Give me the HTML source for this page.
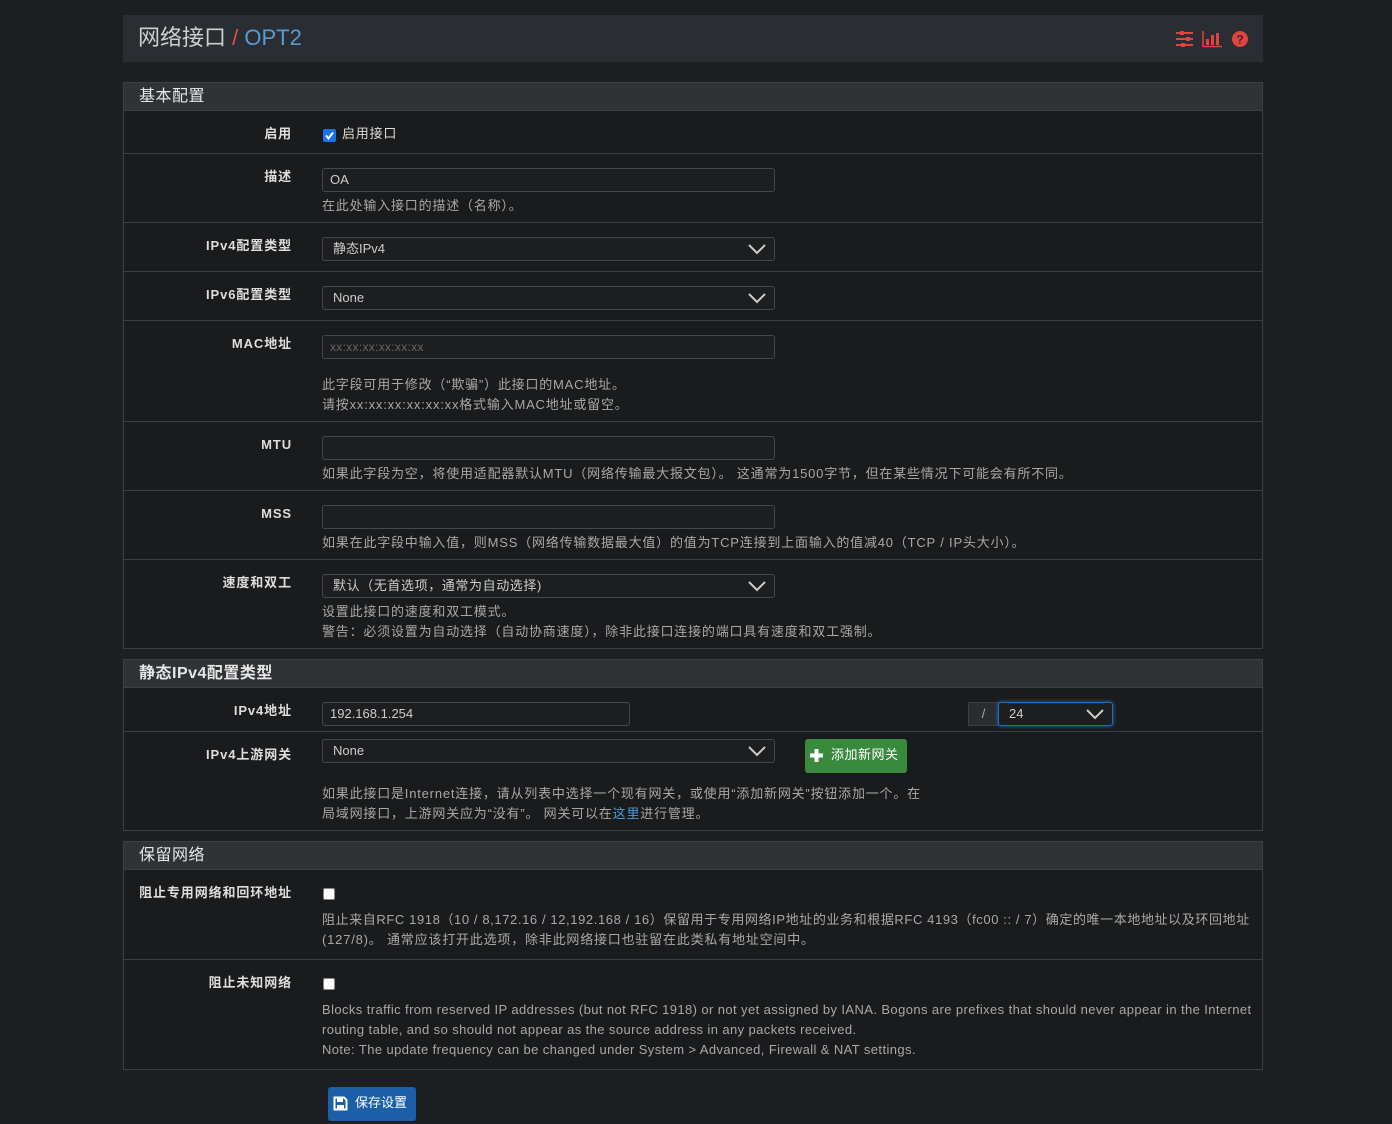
<!DOCTYPE html>
<html><head><meta charset="utf-8">
<style>
*{box-sizing:border-box;margin:0;padding:0}
body{width:1392px;height:1124px;background:#1e1f22;font-family:"Liberation Sans","Noto Sans CJK SC",sans-serif;font-size:13px;color:#aaa;position:relative;overflow:hidden}
.a{position:absolute}
.t{position:absolute;line-height:20px;white-space:nowrap}
.lbl{position:absolute;right:1100px;line-height:20px;white-space:nowrap;font-weight:bold;color:#ddd;text-align:right;letter-spacing:0.9px}
.panel{position:absolute;left:123px;width:1140px;background:#1a1b1d;border:1px solid #3c3e41}
.ph{position:absolute;left:0;right:0;top:0;height:28px;background:#303336;border-bottom:1px solid #3c3e41;color:#e6e6e6;font-size:16px;line-height:28px;padding-left:15px;letter-spacing:0.5px}
.hr{position:absolute;left:124px;width:1138px;height:1px;background:#3c3e41}
.in{position:absolute;height:24px;border:1px solid #45474a;border-radius:3px;background:#1d1e20;color:#ccc;line-height:22px;padding-left:7px;font-size:13px}
.sel{padding-left:10px}
.sel svg{position:absolute;right:8px;top:6px}
.cb{position:absolute;width:12px;height:12px;background:#fff;border-radius:2px;border:1px solid #888}
.help{color:#a8a8a8;letter-spacing:0.8px}
.en{letter-spacing:0.4px}
</style></head><body>

<div class="a" style="left:123px;top:15px;width:1140px;height:47px;background:#2a2d31"></div>
<div class="t" style="left:138px;top:25px;font-size:22px;line-height:26px;color:#cfcfcf">网络接口<span style="color:#d9534f"> / </span><span style="color:#5b9bd5">OPT2</span></div>
<svg class="a" style="left:1176px;top:30px" width="72" height="18" viewBox="0 0 72 18">
<g fill="#e0443e" stroke="#e0443e">
<line x1="0" y1="3" x2="17" y2="3" stroke-width="2"/><line x1="0" y1="9" x2="17" y2="9" stroke-width="2"/><line x1="0" y1="15" x2="17" y2="15" stroke-width="2"/>
<rect x="4" y="1" width="4" height="4" stroke="none"/><rect x="10" y="7" width="4" height="4" stroke="none"/><rect x="5" y="13" width="4" height="4" stroke="none"/>
<line x1="27" y1="1" x2="27" y2="17" stroke-width="1.5"/><line x1="27" y1="16.5" x2="46" y2="16.5" stroke-width="1.5"/>
<rect x="30" y="9" width="3" height="6" stroke="none"/><rect x="35" y="5" width="3" height="10" stroke="none"/><rect x="40" y="3" width="3" height="12" stroke="none"/>
<circle cx="64" cy="9" r="8" stroke="none"/>
</g>
<text x="64" y="13.5" font-size="12" font-weight="bold" fill="#2a2d31" text-anchor="middle" font-family="Liberation Sans">?</text>
</svg>

<!-- Panel 1 -->
<div class="panel" style="top:82px;height:567px"><div class="ph">基本配置</div></div>
<div class="hr" style="top:153px"></div>
<div class="hr" style="top:222px"></div>
<div class="hr" style="top:271px"></div>
<div class="hr" style="top:320px"></div>
<div class="hr" style="top:421px"></div>
<div class="hr" style="top:490px"></div>
<div class="hr" style="top:559px"></div>

<div class="lbl" style="top:124px">启用</div>
<div class="a" style="left:323px;top:129px;width:13px;height:13px;background:#1a73e8;border-radius:2px"></div>
<svg class="a" style="left:323px;top:129px" width="13" height="13"><path d="M3 6.5 L5.5 9.5 L10 3.5" stroke="#fff" stroke-width="2" fill="none"/></svg>
<div class="t" style="left:342px;top:124px;color:#ddd;letter-spacing:0.8px">启用接口</div>

<div class="lbl" style="top:167px">描述</div>
<div class="in" style="left:322px;top:168px;width:453px">OA</div>
<div class="t help" style="left:322px;top:196px">在此处输入接口的描述（名称）。</div>

<div class="lbl" style="top:236px">IPv4配置类型</div>
<div class="in sel" style="left:322px;top:237px;width:453px">静态IPv4<svg width="18" height="11"><path d="M1 1 L9 9 L17 1" stroke="#ccc" stroke-width="2" fill="none"/></svg></div>

<div class="lbl" style="top:285px">IPv6配置类型</div>
<div class="in sel" style="left:322px;top:286px;width:453px">None<svg width="18" height="11"><path d="M1 1 L9 9 L17 1" stroke="#ccc" stroke-width="2" fill="none"/></svg></div>

<div class="lbl" style="top:334px">MAC地址</div>
<div class="in" style="left:322px;top:335px;width:453px;color:#666;font-size:12px;letter-spacing:0.3px">xx:xx:xx:xx:xx:xx</div>
<div class="t help" style="left:322px;top:375px">此字段可用于修改（“欺骗”）此接口的MAC地址。</div>
<div class="t help" style="left:322px;top:395px">请按xx:xx:xx:xx:xx:xx格式输入MAC地址或留空。</div>

<div class="lbl" style="top:435px">MTU</div>
<div class="in" style="left:322px;top:436px;width:453px"></div>
<div class="t help" style="left:322px;top:464px">如果此字段为空，将使用适配器默认MTU（网络传输最大报文包）。 这通常为1500字节，但在某些情况下可能会有所不同。</div>

<div class="lbl" style="top:504px">MSS</div>
<div class="in" style="left:322px;top:505px;width:453px"></div>
<div class="t help" style="left:322px;top:533px">如果在此字段中输入值，则MSS（网络传输数据最大值）的值为TCP连接到上面输入的值减40（TCP / IP头大小）。</div>

<div class="lbl" style="top:573px">速度和双工</div>
<div class="in sel" style="left:322px;top:574px;width:453px;letter-spacing:0.6px">默认（无首选项，通常为自动选择)<svg width="18" height="11"><path d="M1 1 L9 9 L17 1" stroke="#ccc" stroke-width="2" fill="none"/></svg></div>
<div class="t help" style="left:322px;top:602px">设置此接口的速度和双工模式。</div>
<div class="t help" style="left:322px;top:622px">警告：必须设置为自动选择（自动协商速度），除非此接口连接的端口具有速度和双工强制。</div>

<!-- Panel 2 -->
<div class="panel" style="top:659px;height:172px"><div class="ph" style="font-weight:bold">静态IPv4配置类型</div></div>
<div class="hr" style="top:731px"></div>
<div class="lbl" style="top:701px">IPv4地址</div>
<div class="in" style="left:322px;top:702px;width:308px">192.168.1.254</div>
<div class="a" style="left:968px;top:702px;width:31px;height:24px;background:#2a2c2f;border:1px solid #3c3e41;color:#aaa;text-align:center;line-height:22px">/</div>
<div class="in sel" style="left:998px;top:702px;width:115px;border-color:#1f6fc0;box-shadow:0 0 4px #1f6fc0">24<svg width="18" height="11"><path d="M1 1 L9 9 L17 1" stroke="#ccc" stroke-width="2" fill="none"/></svg></div>

<div class="lbl" style="top:745px">IPv4上游网关</div>
<div class="in sel" style="left:322px;top:739px;width:453px">None<svg width="18" height="11"><path d="M1 1 L9 9 L17 1" stroke="#ccc" stroke-width="2" fill="none"/></svg></div>
<div class="a" style="left:805px;top:739px;width:102px;height:34px;background:#3a8a3e;border-radius:3px"></div>
<svg class="a" style="left:809px;top:748px" width="15" height="15"><path d="M7.5 1 V14 M1 7.5 H14" stroke="#fff" stroke-width="4"/></svg>
<div class="t" style="left:831px;top:745px;color:#fff;letter-spacing:0.5px">添加新网关</div>
<div class="t help" style="left:322px;top:784px">如果此接口是Internet连接，请从列表中选择一个现有网关，或使用“添加新网关”按钮添加一个。在</div>
<div class="t help" style="left:322px;top:804px">局域网接口，上游网关应为“没有”。 网关可以在<span style="color:#4a9be0">这里</span>进行管理。</div>

<!-- Panel 3 -->
<div class="panel" style="top:841px;height:229px"><div class="ph">保留网络</div></div>
<div class="hr" style="top:959px"></div>
<div class="lbl" style="top:883px">阻止专用网络和回环地址</div>
<div class="cb" style="left:323px;top:888px"></div>
<div class="t help" style="left:322px;top:910px;letter-spacing:0.6px">阻止来自RFC 1918（10 / 8,172.16 / 12,192.168 / 16）保留用于专用网络IP地址的业务和根据RFC 4193（fc00 :: / 7）确定的唯一本地地址以及环回地址</div>
<div class="t help" style="left:322px;top:930px">(127/8)。 通常应该打开此选项，除非此网络接口也驻留在此类私有地址空间中。</div>

<div class="lbl" style="top:973px">阻止未知网络</div>
<div class="cb" style="left:323px;top:978px"></div>
<div class="t help en" style="left:322px;top:1000px">Blocks traffic from reserved IP addresses (but not RFC 1918) or not yet assigned by IANA. Bogons are prefixes that should never appear in the Internet</div>
<div class="t help en" style="left:322px;top:1020px">routing table, and so should not appear as the source address in any packets received.</div>
<div class="t help en" style="left:322px;top:1040px">Note: The update frequency can be changed under System &gt; Advanced, Firewall &amp; NAT settings.</div>

<div class="a" style="left:328px;top:1087px;width:88px;height:34px;background:#1a5fa8;border-radius:3px"></div>
<svg class="a" style="left:333px;top:1096px" width="15" height="15"><path d="M1.5 1.5 H11 L13.5 4 V13.5 H1.5 Z" stroke="#fff" stroke-width="2" fill="none"/><rect x="4" y="2" width="6" height="4" fill="#fff"/><rect x="4" y="9" width="7" height="4" fill="#fff"/></svg>
<div class="t" style="left:355px;top:1093px;color:#fff">保存设置</div>
</body></html>
